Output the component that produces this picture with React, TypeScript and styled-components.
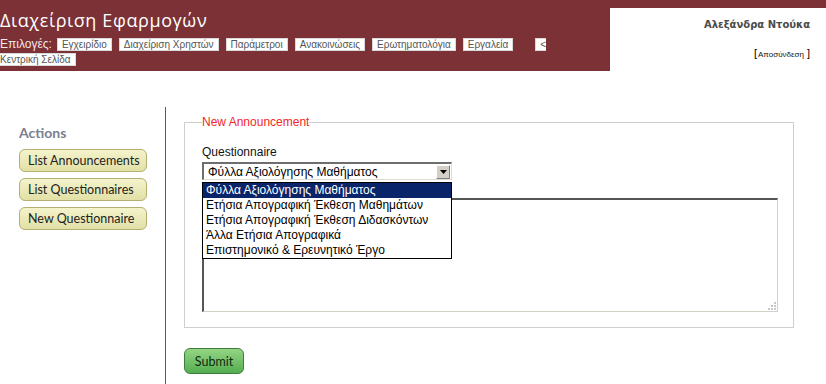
import React from 'react';
import styled, { createGlobalStyle } from 'styled-components';

const GlobalStyle = createGlobalStyle`
	html, body {
		margin: 0;
		padding: 0;
		background: #fff;
	}
	body {
		font-family: "Liberation Sans", Arial, sans-serif;
	}
`;

const maroon = '#7b3135';

const Header = styled.header`
	display: flex;
	height: 71px;
	background: ${maroon};
`;
const HeaderLeft = styled.div`
	width: 610px;
	padding-top: 9px;
	box-sizing: border-box;
`;
const AppTitle = styled.h1`
	margin: 0 0 6px;
	font-family: "Open Sans", sans-serif;
	font-size: 18px;
	font-weight: 400;
	letter-spacing: 0.6px;
	line-height: 22px;
	color: #fff;
`;
const MenuLine = styled.div`
	font-size: 10px;
	line-height: 15px;
	color: #555;
`;
const MenuLabel = styled.span`
	font-size: 12px;
	color: #f4e8e8;
	margin-right: 5px;
`;
const MenuItem = styled.span`
	background: #fff;
	border: 1px solid #d8d8d8;
	padding: 0 4px;
	margin-right: 7px;
	white-space: nowrap;
`;
const MenuItemBreak = styled.span`
	background: #fff;
	border: 1px solid #d8d8d8;
	padding: 0 4px;
	margin-left: 15px;
`;
const UserPanel = styled.div`
	flex: 1;
	margin-top: 8px;
	background: #fff;
	text-align: right;
	padding: 11px 16px 0 0;
`;
const UserName = styled.div`
	font-family: "DejaVu Sans", Verdana, sans-serif;
	font-size: 10px;
	font-weight: 700;
	color: #4a4a4a;
`;
const Logout = styled.div`
	margin-top: 17px;
	font-size: 11px;
	color: #000;
	a {
		font-size: 8px;
		color: #111;
		text-decoration: none;
		margin: 0 3px 0 1px;
	}
`;

const Main = styled.div`
	display: flex;
	margin-top: 36px;
	min-height: 277px;
`;
const Sidebar = styled.aside`
	width: 166px;
	border-right: 1px solid #5c5c5c;
	padding: 17px 0 0 19px;
	box-sizing: border-box;
`;
const SideTitle = styled.div`
	font-family: "Lato", sans-serif;
	font-size: 14px;
	font-weight: 700;
	color: #7a8090;
	margin-bottom: 8px;
`;
const ActionButton = styled.button`
	display: block;
	width: 128px;
	height: 23px;
	margin-bottom: 6px;
	padding: 0 0 0 8px;
	text-align: left;
	font-family: "Lato", sans-serif;
	font-size: 12.5px;
	color: #222;
	background: linear-gradient(#f4f3cc, #e2e0a6);
	border: 1px solid #b3b071;
	border-radius: 6px;
`;

const Content = styled.div`
	flex: 1;
	padding: 8px 0 0 18px;
`;
const Fieldset = styled.fieldset`
	width: 610px;
	height: 213px;
	margin: 0;
	padding: 0 15px 0 17px;
	box-sizing: border-box;
	border: 1px solid #cfcfcf;
	position: relative;
`;
const Legend = styled.legend`
	padding: 0;
	font-size: 12px;
	color: #f02828;
`;
const FieldLabel = styled.div`
	margin-top: 16px;
	font-size: 12px;
	color: #111;
`;
const SelectWrap = styled.div`
	position: relative;
	width: 250px;
	margin-top: 3px;
`;
const SelectBox = styled.div`
	display: flex;
	align-items: center;
	height: 18px;
	box-sizing: border-box;
	border-top: 2px solid #6e6e6e;
	border-left: 2px solid #6e6e6e;
	border-right: 1px solid #e0ddd6;
	border-bottom: 1px solid #e0ddd6;
	background: #fff;
	font-size: 12px;
	color: #000;
	padding-left: 4px;
`;
const SelectText = styled.span`
	flex: 1;
`;
const ArrowButton = styled.span`
	width: 14px;
	height: 14px;
	margin-right: 1px;
	background: #d4d0c8;
	display: flex;
	align-items: center;
	justify-content: center;
	border-top: 1px solid #fff;
	border-left: 1px solid #fff;
	border-right: 1px solid #808080;
	border-bottom: 1px solid #808080;
	box-sizing: border-box;
`;
const Dropdown = styled.ul`
	position: absolute;
	left: 0;
	top: 20px;
	width: 250px;
	margin: 0;
	padding: 0;
	list-style: none;
	box-sizing: border-box;
	border: 1px solid #000;
	background: #fff;
	z-index: 2;
`;
const Option = styled.li<{ $active?: boolean }>`
	height: 15px;
	line-height: 15px;
	padding-left: 3px;
	font-size: 12px;
	color: ${({ $active }) => ($active ? '#fff' : '#000')};
	background: ${({ $active }) => ($active ? '#0a246a' : 'transparent')};
	white-space: nowrap;
`;
const AreaWrap = styled.div`
	position: relative;
	margin-top: 18px;
	width: 576px;
	height: 114px;
`;
const TextArea = styled.textarea`
	display: block;
	width: 100%;
	height: 100%;
	box-sizing: border-box;
	resize: none;
	border-top: 2px solid #555;
	border-left: 2px solid #555;
	border-right: 1px solid #d4d0c8;
	border-bottom: 1px solid #d4d0c8;
	outline: none;
`;
const Grip = styled.svg`
	position: absolute;
	right: 2px;
	bottom: 2px;
`;
const SubmitButton = styled.button`
	margin-top: 20px;
	width: 60px;
	height: 26px;
	padding: 0;
	font-family: "Lato", sans-serif;
	font-size: 12.5px;
	color: #102810;
	background: linear-gradient(#94d585, #55ad50);
	border: 1px solid #3d7f3a;
	border-radius: 6px;
`;

const menu = ['Εγχειρίδιο', 'Διαχείριση Χρηστών', 'Παράμετροι', 'Ανακοινώσεις', 'Ερωτηματολόγια', 'Εργαλεία'];
const questionnaires = [
	'Φύλλα Αξιολόγησης Μαθήματος',
	'Ετήσια Απογραφική Έκθεση Μαθημάτων',
	'Ετήσια Απογραφική Έκθεση Διδασκόντων',
	'Άλλα Ετήσια Απογραφικά',
	'Επιστημονικό & Ερευνητικό Έργο',
];

const App = () => (
	<>
		<GlobalStyle />
		<Header>
			<HeaderLeft>
				<AppTitle>Διαχείριση Εφαρμογών</AppTitle>
				<MenuLine>
					<MenuLabel>Επιλογές:</MenuLabel>
					{menu.map((m) => (
						<MenuItem key={m}>{m}</MenuItem>
					))}
					<MenuItemBreak>
						&lt;
						<br />
						Κεντρική Σελίδα
					</MenuItemBreak>
				</MenuLine>
			</HeaderLeft>
			<UserPanel>
				<UserName>Αλεξάνδρα Ντούκα</UserName>
				<Logout>
					[<a href="#">Αποσύνδεση</a>]
				</Logout>
			</UserPanel>
		</Header>
		<Main>
			<Sidebar>
				<SideTitle>Actions</SideTitle>
				<ActionButton>List Announcements</ActionButton>
				<ActionButton>List Questionnaires</ActionButton>
				<ActionButton>New Questionnaire</ActionButton>
			</Sidebar>
			<Content>
				<Fieldset>
					<Legend>New Announcement</Legend>
					<FieldLabel>Questionnaire</FieldLabel>
					<SelectWrap>
						<SelectBox>
							<SelectText>{questionnaires[0]}</SelectText>
							<ArrowButton>
								<svg width="7" height="4" viewBox="0 0 7 4">
									<path d="M0 0h7L3.5 4z" fill="#000" />
								</svg>
							</ArrowButton>
						</SelectBox>
						<Dropdown>
							{questionnaires.map((q, i) => (
								<Option key={q} $active={i === 0}>
									{q}
								</Option>
							))}
						</Dropdown>
					</SelectWrap>
					<AreaWrap>
						<TextArea />
						<Grip width="8" height="8" viewBox="0 0 8 8">
							<g fill="#c8c8c8">
								<rect x="6" y="0" width="2" height="2" />
								<rect x="3" y="3" width="2" height="2" />
								<rect x="6" y="3" width="2" height="2" />
								<rect x="0" y="6" width="2" height="2" />
								<rect x="3" y="6" width="2" height="2" />
								<rect x="6" y="6" width="2" height="2" />
							</g>
						</Grip>
					</AreaWrap>
				</Fieldset>
				<SubmitButton>Submit</SubmitButton>
			</Content>
		</Main>
	</>
);

export default App;
